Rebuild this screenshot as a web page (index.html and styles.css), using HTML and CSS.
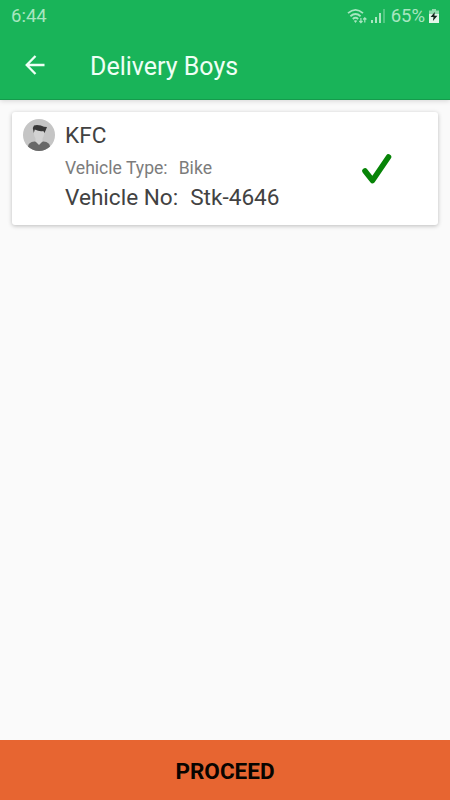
FILE: index.html
```html
<!DOCTYPE html>
<html lang="en">
<head>
  <meta charset="UTF-8">
  <meta name="viewport" content="width=device-width, initial-scale=1.0">
  <title>Delivery Boys</title>
  <link rel="stylesheet" href="styles.css">
</head>
<body>

  <header class="header">
    <div class="status-bar">
      <span class="time">6:44</span>
      <div class="status-icons">
        <!-- wifi -->
        <svg class="wifi" width="21" height="17" viewBox="0 0 21 17" fill="none" stroke="currentColor">
          <path d="M1 5.200Q8.500 -1.500 16 5.200M3.400 8.200Q8.500 3.800 13.600 8.200M5.800 11Q8.500 8.600 11.200 11" stroke-width="1.800"/>
          <path d="M8.500 15L6.800 12.800Q8.500 11.500 10.200 12.800Z" fill="currentColor" stroke="none"/>
          <path d="M13.900 10v4.500M12.300 13l1.600 1.700 1.600-1.700M17.800 14.500V10M16.200 11.500l1.600-1.700 1.600 1.700" stroke-width="1.200"/>
        </svg>
        <!-- signal -->
        <svg class="signal" width="14" height="14" viewBox="0 0 14 14" fill="currentColor">
          <path d="M0 11h2v3H0zM4 8h2v6H4zM8 4h2v10H8z"/>
          <path d="M12 0h2v14h-2z" opacity=".4"/>
        </svg>
        <span class="percent">65%</span>
        <!-- battery -->
        <svg class="battery" width="10" height="14" viewBox="0 0 10 14">
          <path d="M3 0h4v1.500h3V5H0V1.500h3z" fill="#8ddbac"/>
          <path d="M0 5h10v9H0z" fill="#e2f6e9"/>
          <path d="M5.800 3L1.600 8h2.900L3.900 12 8.400 6.700H5.400z" fill="#10251a"/>
        </svg>
      </div>
    </div>
    <div class="toolbar">
      <svg class="back" width="20" height="20" viewBox="0 0 20 20" fill="none" stroke="currentColor" stroke-width="2.300">
        <path d="M19.500 10H2M10.500 1L1.700 10l8.800 9"/>
      </svg>
      <h1 class="title">Delivery Boys</h1>
    </div>
  </header>

  <main class="list">
    <div class="card">
      <svg class="avatar" width="32" height="32" viewBox="0 0 32 32">
        <defs>
          <clipPath id="circle"><circle cx="16" cy="16" r="16"/></clipPath>
        </defs>
        <g clip-path="url(#circle)">
          <path d="M0 0h32v32H0z" fill="#c5c5c5"/>
          <path d="M5 32v-4q0-5 6.500-5.500h9q6.500.500 6.500 5.500v4z" fill="#686868"/>
          <path d="M12.500 18h7v4.500L16 26l-3.500-3.500z" fill="#d2d2d2"/>
          <path d="M11 10q5 1 10 0v6q-1 4-5 6-4-2-5-6z" fill="#d2d2d2"/>
          <path d="M10.800 14L9.800 9l1.200-2.500 3-.5q4 0 7 1.700l3 .3-1.200 3-1.300 3-1.200-2q-4 .8-8.500-1.400z" fill="#383838"/>
        </g>
      </svg>
      <div class="info">
        <p class="name">KFC</p>
        <p class="type"><span>Vehicle Type:</span><span>Bike</span></p>
        <p class="number"><span>Vehicle No:</span><span>Stk-4646</span></p>
      </div>
      <svg class="check" width="32" height="32" viewBox="0 0 32 32" fill="none" stroke="#078407" stroke-width="5.600" stroke-linecap="round" stroke-linejoin="round">
        <path d="M4 18l7.500 9.500L27.500 4"/>
      </svg>
    </div>
  </main>

  <button class="proceed">PROCEED</button>

</body>
</html>
```
FILE: styles.css
```css
* {
  margin: 0;
  padding: 0;
  box-sizing: border-box;
}

body {
  display: flex;
  flex-direction: column;
  height: 100vh;
  background: #fafafa;
  font-family: Roboto, sans-serif;
}

.header {
  height: 100px;
  background: #19b459;
  border-bottom: 1px solid #159b4c;
  box-shadow: 0 1px 5px rgba(0, 0, 0, 0.15);
}

.status-bar {
  display: flex;
  justify-content: space-between;
  align-items: center;
  height: 32px;
  padding: 0 11px 0 11px;
  color: #a8e6c0;
  font-size: 18.5px;
}

.status-icons {
  display: flex;
  align-items: center;
}

.signal {
  margin: 0 6px 1px 3px;
}

.battery {
  margin-left: 4px;
}

.toolbar {
  display: flex;
  align-items: center;
  height: 67px;
  padding-left: 25px;
  color: #effff5;
}

.back {
  margin-bottom: 1px;
}

.title {
  margin: 2px 0 0 45px;
  font-size: 25px;
  font-weight: 400;
}

.list {
  flex: 1;
  padding: 12px;
}

.card {
  display: flex;
  height: 113px;
  padding: 7px 45px 0 11px;
  background: #fff;
  border-radius: 3px;
  box-shadow: 0 1px 4px rgba(0, 0, 0, 0.25);
}

.info {
  flex: 1;
  margin-left: 10px;
  padding-top: 1px;
}

.name,
.number {
  color: #424242;
  font-size: 22.6px;
  line-height: 32px;
}

.type {
  color: #7c7c7c;
  font-size: 17.6px;
  line-height: 32px;
}

.type span + span {
  margin-left: 11px;
}

.number {
  line-height: 27px;
}

.number span + span {
  margin-left: 12px;
}

.check {
  margin-top: 34px;
}

.proceed {
  height: 60px;
  padding-top: 2px;
  border: none;
  background: #e76531;
  color: #080400;
  font-family: inherit;
  font-size: 22.5px;
  font-weight: 700;
}
```
